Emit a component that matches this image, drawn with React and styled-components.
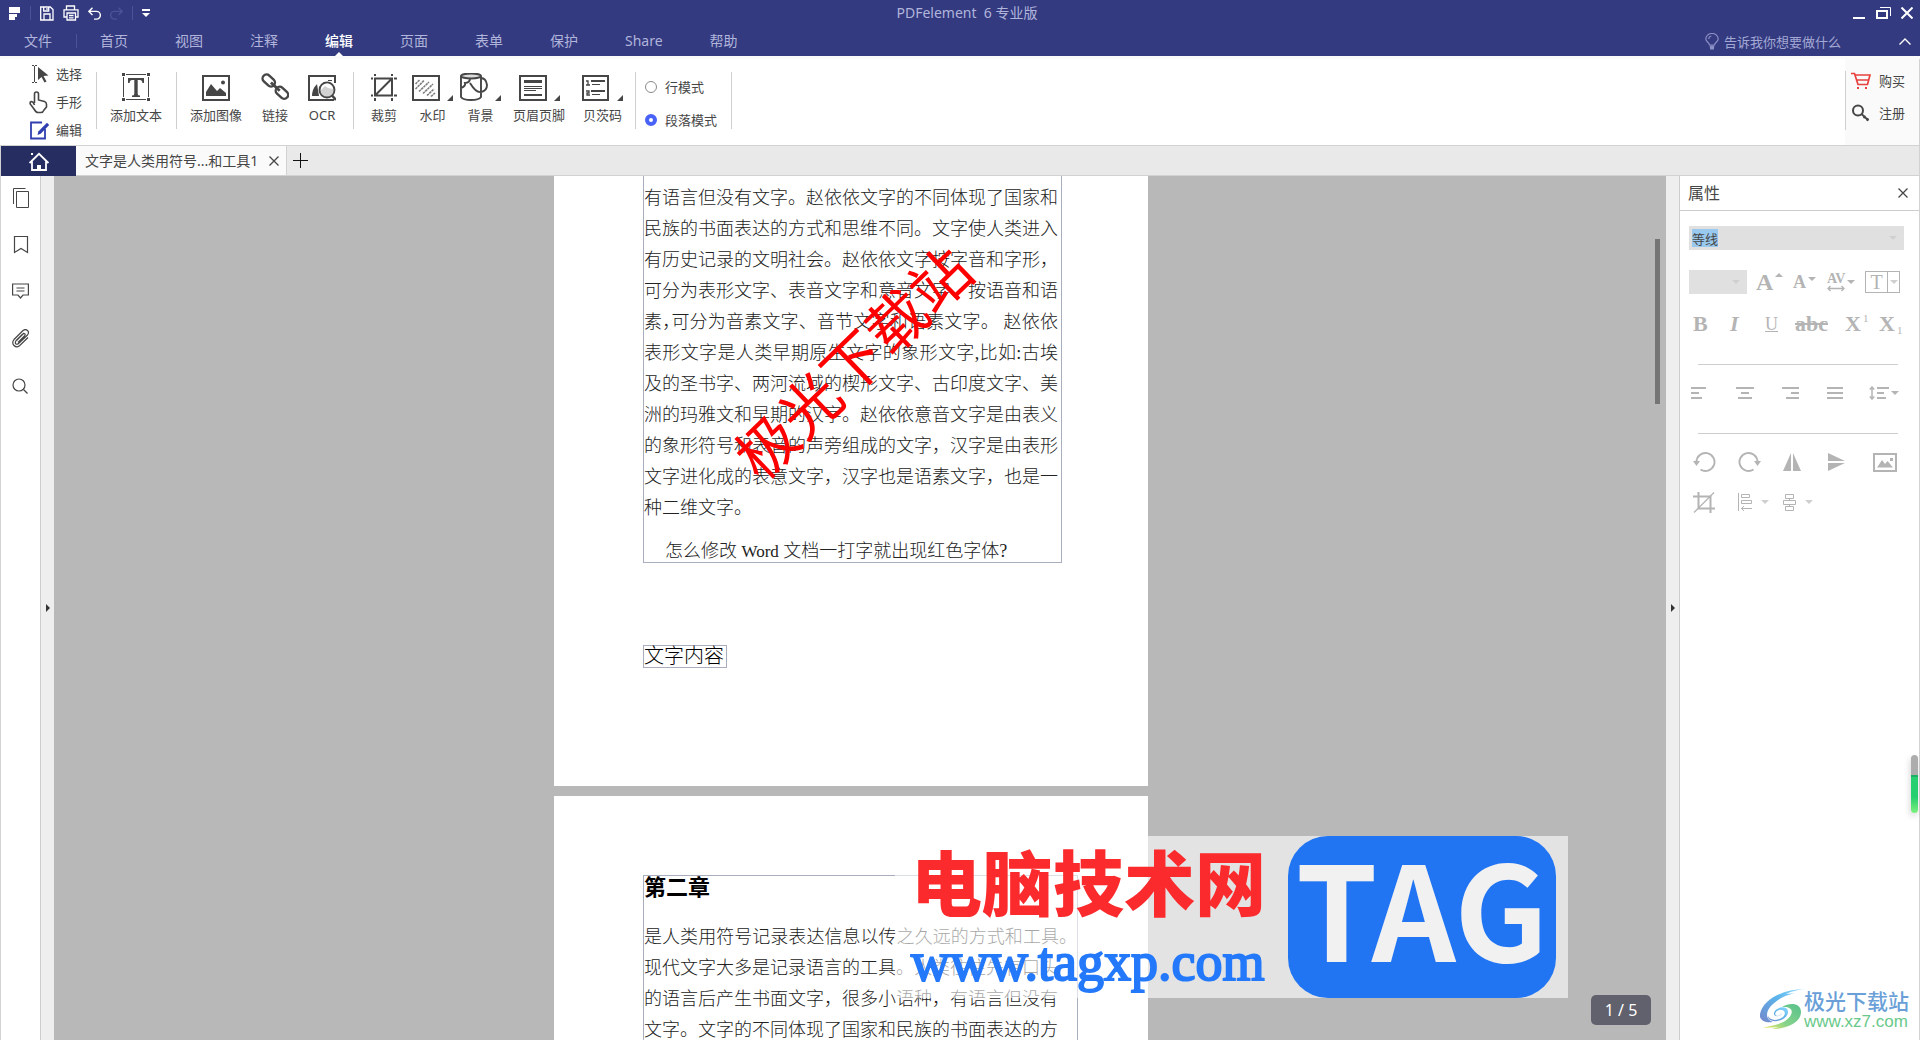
import React from "react";
import styled, { createGlobalStyle, css } from "styled-components";

const uiFont = '"Noto Sans", "Noto Sans CJK SC", sans-serif';
const pageFont = '"Liberation Serif", "Noto Sans CJK SC", serif';

const GlobalStyle = createGlobalStyle`
  *, *::before, *::after { box-sizing: border-box; }
  body { margin: 0; background: #fff; font-family: ${uiFont}; font-size: 13px; color: #464646; }
  button, input, select { font: inherit; color: inherit; margin: 0; padding: 0; border: 0; background: none; border-radius: 0; }
  h1, h2, p { margin: 0; font-size: inherit; font-weight: inherit; }
  svg { display: block; flex: none; }
  a { color: inherit; text-decoration: none; }
`;

/* ---------- frame ---------- */
const Window = styled.div`
  height: 100vh;
  display: flex;
  flex-direction: column;
  overflow: hidden;
`;
const Header = styled.header`
  background: #333a80;
  color: #b1b5db;
  flex: none;
`;
const TitleBar = styled.div`
  display: grid;
  grid-template-columns: 1fr auto 1fr;
  align-items: center;
  height: 26px;
`;
const QuickTools = styled.div`
  display: flex;
  align-items: center;
  gap: 9px;
  padding-left: 9px;
`;
const PlainButton = styled.button`
  display: flex;
  align-items: center;
  justify-content: center;
  flex: none;
`;
const TitleRule = styled.span`
  width: 1px;
  height: 14px;
  background: #4b5295;
`;
const AppTitle = styled.h1`
  padding-left: 14px;
  font-size: 14px;
  line-height: 20px;
  white-space: pre;
`;
const WindowButtons = styled.div`
  display: flex;
  justify-content: flex-end;
  align-items: center;
  gap: 10px;
  padding-right: 7px;
`;
const MenuBar = styled.nav`
  display: flex;
  align-items: center;
  height: 30px;
  padding: 0 9px 0 24px;
`;
const MenuItem = styled.a`
  position: relative;
  font-size: 14px;
  line-height: 30px;
  margin-right: 47px;
  ${(p) => p.$active && css`
    color: #fff;
    font-weight: 500;
    &::after {
      content: "";
      position: absolute;
      left: 50%;
      bottom: 0;
      margin-left: -4px;
      border: 4px solid transparent;
      border-top: 0;
      border-bottom-color: #fff;
    }
  `}
`;
const MenuRule = styled(TitleRule)`
  margin: 0 23px 0 -23px;
`;
const AskBox = styled.label`
  display: flex;
  align-items: center;
  gap: 5px;
  margin-left: auto;
  margin-right: 39px;
  padding-top: 2px;
  input { width: 136px; outline: 0; }
  input::placeholder { color: #a3a8d4; opacity: 1; }
`;

/* ---------- ribbon ---------- */
const Ribbon = styled.section`
  display: flex;
  height: 90px;
  flex: none;
  border-top: 3px solid #fafafa;
  border-bottom: 1px solid #d2d2d2;
  background: #fff;
`;
const ModeList = styled.div`
  display: flex;
  flex-direction: column;
  padding: 1px 14px 0 29px;
`;
const ModeButton = styled.button`
  display: grid;
  grid-template-columns: 21px auto;
  align-items: center;
  gap: 6px;
  height: 28px;
  line-height: 20px;
`;
const ToolGroup = styled.div`
  position: relative;
  display: flex;
  align-items: flex-start;
  padding: 14px ${(p) => p.$end || 14}px 0 ${(p) => p.$start || 14}px;
  &::before {
    content: "";
    position: absolute;
    left: 0;
    top: 13px;
    height: 57px;
    border-left: 1px solid #cfcfcf;
  }
`;
const Tool = styled.button`
  display: flex;
  flex-direction: column;
  align-items: center;
  gap: 4px;
  line-height: 20px;
  margin-left: ${(p) => p.$gap || 0}px;
  white-space: nowrap;
`;
const ToolFace = styled.span`
  display: flex;
  align-items: flex-end;
  gap: 7px;
  height: 28px;
`;
const Corner = styled.span`
  border: 3px solid transparent;
  border-right-color: #464646;
  border-bottom-color: #464646;
`;
const RadioGroup = styled.fieldset`
  position: relative;
  display: flex;
  flex-direction: column;
  gap: 13px;
  border: 0;
  margin: 0;
  padding: 18px 15px 0 10px;
  &::before, &::after {
    content: "";
    position: absolute;
    top: 13px;
    height: 57px;
    border-left: 1px solid #cfcfcf;
  }
  &::before { left: 0; }
  &::after { right: 0; }
`;
const RadioLabel = styled.label`
  display: flex;
  align-items: center;
  gap: 8px;
  line-height: 20px;
`;
const Radio = styled.input`
  appearance: none;
  width: 12px;
  height: 12px;
  border: 1px solid #8a8a8a;
  border-radius: 50%;
  &:checked { border: 4px solid #4861f7; }
`;
const Account = styled.div`
  position: relative;
  margin-left: auto;
  width: 75px;
  background: #fafafa;
  border-right: 1px solid #d2d2d2;
  padding: 12px 0 0 6px;
  display: flex;
  flex-direction: column;
  gap: 12px;
  &::before {
    content: "";
    position: absolute;
    left: 0;
    top: 12px;
    height: 59px;
    border-left: 1px solid #cfcfcf;
  }
`;
const AccountLink = styled.a`
  display: flex;
  align-items: center;
  gap: 8px;
  line-height: 20px;
`;

/* ---------- document tabs ---------- */
const TabBar = styled.div`
  display: flex;
  height: 30px;
  flex: none;
  background: #e9e9e9;
  border: solid #d2d2d2;
  border-width: 0 1px 1px;
`;
const HomeTab = styled(PlainButton)`
  width: 75px;
  height: 30px;
  background: #262d61;
`;
const DocTab = styled.div`
  display: flex;
  align-items: center;
  gap: 11px;
  padding: 0 7px 0 9px;
  background: #fafafa;
  border-right: 1px solid #d2d2d2;
  font-size: 14px;
  line-height: 28px;
`;
const AddTab = styled(PlainButton)`
  margin-left: 6px;
`;

/* ---------- body ---------- */
const Body = styled.div`
  flex: 1;
  min-height: 0;
  display: flex;
  border: solid #d2d2d2;
  border-width: 0 1px;
`;
const SideBar = styled.nav`
  width: 40px;
  flex: none;
  display: flex;
  flex-direction: column;
  align-items: center;
  gap: 27px;
  padding-top: 12px;
  border-right: 1px solid #cdcdcd;
`;
const Splitter = styled.button`
  width: 13px;
  flex: none;
  background: #eee;
  display: flex;
  align-items: center;
  justify-content: center;
  &::before {
    content: "";
    border: 4px solid transparent;
    border-right: 0;
    border-left-color: #333;
  }
`;
const Workspace = styled.main`
  position: relative;
  flex: 1;
  min-width: 0;
  overflow: hidden;
  background: #b8b8b8;
  padding-right: 18px;
  display: flex;
  flex-direction: column;
  align-items: center;
  gap: 10px;
`;
const ScrollThumb = styled.span`
  position: absolute;
  right: 6px;
  top: 63px;
  width: 5px;
  height: 165px;
  background: #757575;
`;
const Page = styled.article`
  position: relative;
  flex: none;
  width: 594px;
  background: #fff;
  padding: ${(p) => p.$top || 0}px 70px 118px 89px;
  color: #222;
  font-family: ${pageFont};
  font-size: 18px;
  font-weight: 300;
  line-height: 31px;
`;
const TextBlock = styled.section`
  width: ${(p) => (p.$wide ? 435 : 419)}px;
  border: 1px solid #a9aebf;
  ${(p) => !p.$wide && css`border-top: 0; padding-top: 7px; padding-right: 3px;`}
`;
const Line = styled.span`
  display: block;
  height: 31px;
  width: ${(p) => (p.$full ? "auto" : "414px")};
  text-align: justify;
  text-align-last: ${(p) => (p.$last ? "left" : "justify")};
`;
const NarrowMark = styled.span`
  font-feature-settings: "halt";
`;
const Question = styled.p`
  padding: 17px 0 0 21px;
  line-height: 20px;
`;
const Latin = styled.span`
  font-size: 17px;
`;
const SmallBlock = styled.p`
  width: fit-content;
  margin-top: 82px;
  padding: 0 2px 0 0;
  border: 1px solid #a9aebf;
  color: #000;
  font-size: 20px;
  line-height: 21px;
`;
const Chapter = styled.h2`
  color: #000;
  font-size: 22px;
  font-weight: 700;
  line-height: 24px;
  margin-bottom: 22px;
`;
const Diagonal = styled.span`
  position: absolute;
  left: 146px;
  top: 154px;
  width: 310px;
  height: 70px;
  transform: rotate(-44deg);
  text-align: center;
  font-size: 60px;
  line-height: 70px;
  font-weight: 400;
  color: #f00;
  white-space: nowrap;
`;
const SiteBanner = styled.aside`
  position: absolute;
  right: 98px;
  bottom: 42px;
  display: flex;
  height: 162px;
  padding: 0 12px 0 16px;
  gap: 20px;
  background: rgba(255, 255, 255, 0.6);
`;
const SiteWords = styled.div`
  display: flex;
  flex-direction: column;
  width: 357px;
`;
const SiteName = styled.strong`
  font-family: "Noto Sans CJK SC", sans-serif;
  font-size: 71px;
  font-weight: 900;
  line-height: 86px;
  color: #fb2a2c;
  white-space: nowrap;
`;
const SiteUrl = styled.a`
  font-family: "Liberation Serif", serif;
  font-size: 54px;
  line-height: 80px;
  color: #2479fb;
  -webkit-text-stroke: 2px #2479fb;
`;
const TagLogo = styled.div`
  width: 268px;
  height: 162px;
  border-radius: 40px;
  background: #2175f3;
  color: #f1f1f1;
  font-family: "Noto Sans CJK SC", sans-serif;
  font-size: 131px;
  font-weight: 700;
  line-height: 138px;
  text-align: center;
`;
const PageBadge = styled.output`
  position: absolute;
  right: 15px;
  bottom: 15px;
  width: 60px;
  height: 30px;
  border-radius: 5px;
  background: #60616d;
  color: #fff;
  font-size: 16px;
  line-height: 30px;
  text-align: center;
`;

/* ---------- properties panel ---------- */
const Panel = styled.aside`
  position: relative;
  width: 240px;
  flex: none;
  border-left: 1px solid #cdcdcd;
`;
const PanelHeader = styled.div`
  display: flex;
  align-items: center;
  justify-content: space-between;
  height: 35px;
  padding: 0 11px 0 8px;
  border-bottom: 1px solid #cdcdcd;
  font-size: 16px;
  line-height: 34px;
`;
const PanelBody = styled.div`
  padding: 15px 15px 0 9px;
  color: #b4b4b4;
`;
const FontBox = styled.div`
  display: flex;
  align-items: center;
  justify-content: space-between;
  height: 24px;
  padding: 0 7px 0 3px;
  background: #e0e0e0;
  input {
    width: 26px;
    height: 18px;
    background: #99c9ef;
    color: #464646;
    outline: 0;
  }
`;
const Caret = styled.span`
  display: inline-block;
  flex: none;
  margin-top: ${(p) => p.$drop || 0}px;
  border: 4px solid transparent;
  border-${(p) => (p.$up ? "top" : "bottom")}: 0;
  border-${(p) => (p.$up ? "bottom" : "top")}-color: ${(p) => (p.$pale ? "#cfcfcf" : "#b4b4b4")};
`;
const Row = styled.div`
  display: grid;
  grid-template-columns: ${(p) => p.$cols};
  align-items: center;
  justify-items: start;
  height: 24px;
  margin-top: ${(p) => p.$top}px;
  padding-left: ${(p) => p.$inset || 0}px;
`;
const SizeBox = styled.span`
  position: relative;
  width: 58px;
  height: 24px;
  background: #e0e0e0;
  select { appearance: none; width: 100%; height: 100%; }
  ${Caret} { position: absolute; right: 7px; top: 10px; pointer-events: none; }
`;
const Glyph = styled.button`
  display: flex;
  align-items: ${(p) => p.$align || "center"};
  gap: 2px;
  font-family: "Liberation Serif", serif;
  font-size: ${(p) => p.$size || 22}px;
  line-height: 24px;
  font-weight: ${(p) => (p.$plain ? 400 : 700)};
  font-style: ${(p) => (p.$italic ? "italic" : "normal")};
  text-decoration: ${(p) => p.$line || "none"};
  small { font-size: 11px; line-height: 12px; font-weight: 400; }
`;
const Spacing = styled.span`
  display: flex;
  flex-direction: column;
  align-items: center;
  font-size: 14px;
  line-height: 13px;
`;
const ColorBox = styled.button`
  display: grid;
  grid-template-columns: 22px 12px;
  align-items: center;
  justify-items: center;
  width: 35px;
  height: 22px;
  border: 1px solid #b4b4b4;
  font-family: "Liberation Serif", serif;
  font-size: 20px;
  line-height: 20px;
  span:first-child { border-right: 1px solid #b4b4b4; width: 22px; }
`;
const Rule = styled.hr`
  margin: 28px 6px 0 9px;
  border: 0;
  border-top: 1px solid #cdcdcd;
`;
const IconGrid = styled.div`
  display: grid;
  grid-template-columns: repeat(4, 45px) 1fr;
  align-items: center;
  height: 24px;
  margin-top: 16px;
  padding-left: ${(p) => p.$inset || 0}px;
`;
const IconButton = styled.button`
  display: flex;
  align-items: center;
  gap: ${(p) => p.$gap || 8}px;
`;
const Meter = styled.span`
  position: absolute;
  right: 1px;
  top: 579px;
  width: 7px;
  height: 58px;
  border-radius: 4px;
  background: linear-gradient(#adadad 0 20px, #1fae63 20px 22px, #26cf6f 22px 42px, #7df07f);
  box-shadow: -1px 3px 6px rgba(0, 0, 0, 0.16);
`;
const DownloadSite = styled.div`
  position: absolute;
  right: 10px;
  bottom: 8px;
  display: flex;
  align-items: center;
`;
const DownloadText = styled.div`
  display: flex;
  flex-direction: column;
  strong {
    font-size: 21px;
    line-height: 24px;
    font-weight: 500;
    font-family: "Noto Sans CJK SC", sans-serif;
    color: #6a9fd8;
  }
  a {
    font-family: "Liberation Sans", sans-serif;
    font-size: 17px;
    line-height: 20px;
    color: #69c98b;
  }
`;

/* ---------- drawings ---------- */
const Svg = ({ w, h, children, sw = 2, color = "currentColor" }) => (
  <svg width={w} height={h} viewBox={`0 0 ${w} ${h}`} fill="none" stroke={color} strokeWidth={sw} aria-hidden="true">
    {children}
  </svg>
);
const solid = { fill: "currentColor", stroke: "none" };
const dark = "#464646";

const Cross = ({ s = 10, sw = 1.3, color = dark }) => (
  <Svg w={s} h={s} sw={sw} color={color}><path d={`M.5.5l${s - 1} ${s - 1}M${s - 0.5}.5L.5 ${s - 0.5}`} /></Svg>
);
const AppMark = () => <Svg w={12} h={13}><path {...solid} fill="#fff" d="M0 0h11v6H0zM0 7h8v3H6v3H0z" /></Svg>;
const Save = () => (
  <Svg w={14} h={15} sw={1.3} color="#fff"><path d="M.7 1h9.600l2.700 2.600V14H.7zM4 14V8h6v6M3.700 1v4h5V1" /><path d="M7 2v2" /></Svg>
);
const Print = () => (
  <Svg w={16} h={16} sw={1.3} color="#fff"><path d="M3.500 4.500V1h8v3.500M3.500 12H1V4.800h14V12h-2.500M4 8h8.500v7H4zM6 10.500h4.500M6 12.800h4.500" /></Svg>
);
const Undo = ({ flip, color = "#fff" }) => (
  <Svg w={13} h={13} sw={1.4} color={color}>
    <g transform={flip ? "translate(13 0) scale(-1 1)" : undefined}><path d="M4.500.8L.9 4.400l3.600 3.600M1 4.400h7.500a3.800 3.800 0 0 1 0 7.700H6" /></g>
  </Svg>
);
const More = () => <Svg w={8} h={8}><path {...solid} fill="#fff" d="M0 0h8v2H0zM0 4h8L4 8z" /></Svg>;
const Minimize = () => <Svg w={14} h={12} color="#fff"><path d="M1 11h12" /></Svg>;
const Restore = () => <Svg w={15} h={12} color="#fff"><path d="M1 4h10v7H1z" /><path strokeWidth="1" d="M4 .5h10.500V9" /></Svg>;
const Bulb = () => (
  <Svg w={14} h={18} sw={1.2} color="#8b90c6"><path d="M4.500 12C4.500 9.500.8 9 .8 6a6.200 5.500 0 0 1 12.400 0c0 3-3.700 3.500-3.700 6zM3.800 6a3 3 0 0 1 2.500-3" /><path d="M4.800 13.500h4.400M5 15.500h4" strokeWidth="2" /></Svg>
);
const SelectIcon = () => (
  <Svg w={21} h={20} sw={1}><path d="M5.500 2v16M3 1.500h2M6 1.500h2M3 18.500h2M6 18.500h2" /><path {...solid} d="M9 3l10.500 8.500-5 .5 3 5.500-2 1-3-5.500L9 16z" /></Svg>
);
const Hand = () => (
  <Svg w={20} h={23} sw={1.6}><path d="M5.500 12V3a2 2 0 0 1 4 0v6l6 1.500q2 .8 2 3v2.500L15 19q-1 2.500-3 2.500H9Q7 21.500 5 18L1.200 13q-.5-2 1-2.500 2 0 3.300 3.500" /></Svg>
);
const EditIcon = () => (
  <Svg w={21} h={20} color="#303fb0"><path d="M16 9v9.500H2V2.500h11" strokeWidth="1.800" /><path d="M8.500 15l.8-3.500L18 2.800l2.200 2.200-8.500 8.700z" {...solid} fill="#303fb0" /></Svg>
);
const AddTextIcon = () => (
  <Svg w={28} h={28} sw={1}>
    <path d="M4 1.500h20M4 26.500h20M1.500 4v20M26.500 4v20" />
    <path {...solid} d="M0 0h3v3H0zM25 0h3v3h-3zM0 25h3v3H0zM25 25h3v3h-3zM6 5h16v5h-1.500q-.5-3-2.500-3h-2.300v14q0 1.500 2.300 1.500V24h-8v-1.500q2.300 0 2.300-1.500V7H10Q8 7 7.500 10H6z" />
  </Svg>
);
const ImageIcon = () => (
  <Svg w={28} h={26}><path d="M1 1h26v24H1z" /><path {...solid} d="M4 21v-4l5-8 6 7 3-3 6 5v3zM19 7.500a2 2 0 1 0 4 0 2 2 0 1 0-4 0" /></Svg>
);
const LinkIcon = () => (
  <Svg w={28} h={28} sw={2.4}>
    <g transform="rotate(43 14 14)"><rect x="-2" y="9.500" width="14" height="8" rx="4" /><rect x="16" y="9.500" width="14" height="8" rx="4" /><path d="M8 13.500h12" strokeWidth="2.800" /></g>
  </Svg>
);
const OcrIcon = () => (
  <Svg w={28} h={26}><path d="M27 8V1H1v24h25" /><path {...solid} d="M4 21q0-7 5-12l2 12zM20 5h4v1h-4z" /><circle cx="19" cy="15" r="7.500" fill="#d2d2d2" strokeWidth="1.800" /><path fill="#fff" stroke="none" d="M13 15a6 6 0 0 1 12-1l-5-1-3-2z" /><path d="M24 20.500l4 4.500" strokeWidth="2.500" /></Svg>
);
const CropIcon = () => (
  <Svg w={28} h={27}><path d="M5 4.500h17v17H5zM5 21.500L22 4.500M5 0v2M22 0v2M5 24v3M22 24v3M1 4.500h2M1 21.500h2M24 4.500h3M24 21.500h3" /></Svg>
);
const WatermarkIcon = () => (
  <Svg w={28} h={26}><path d="M1 1h26v24H1z" /><path stroke="#7c7c7c" strokeWidth="1.600" d="M3.500 9l4-4M3.500 14L12 5.500M7 16.500L17 7M11 18.500l10-9.500M15 20.500l7-6.500M19 21.500l4-3.500" strokeDasharray="2.500 .6" /></Svg>
);
const BackgroundIcon = () => (
  <Svg w={28} h={28} sw={1.9}><ellipse cx="11" cy="3" rx="10" ry="2.500" fill="#ddd" /><path d="M1 3v21q2 3 10 3t10-3V3M1 15q5-2 4-5 5 0 5-5M10 10q6 10 11 9 6-1 6-7-1-7-6-7" /></Svg>
);
const HeaderIcon = () => (
  <Svg w={28} h={26}><path d="M1 1h26v24H1z" /><path strokeWidth="3" d="M5 6.500h18" /><path strokeWidth="1" d="M5 11.500h18M5 13.500h18M5 15.500h12" /><path d="M5 20h18" /></Svg>
);
const BatesIcon = () => (
  <Svg w={28} h={26}><path d="M1 1h25v24H1z" /><path strokeWidth="1.300" d="M4 6h2v4M4 10h4M4 16h3v2H5v2h3" /><path d="M9 6h14M9 16h14" /><path strokeWidth="1" d="M10 9.500h8M10 19.500h8" /></Svg>
);
const CartIcon = () => (
  <Svg w={20} h={18} color="#e8403c"><path d="M0 1.500h3.500L7 12.500h9.500L19 3H4M5.500 8h12" strokeWidth="1.700" /><path d="M6 16h2M14 16h2" /></Svg>
);
const KeyIcon = () => (
  <Svg w={20} h={18}><circle cx="7" cy="6.500" r="5" /><path d="M10.500 10l7 6.500M12.500 14l2-2M15.500 16.500l2-2" strokeWidth="1.800" /></Svg>
);
const HomeIcon = () => (
  <Svg w={20} h={19} sw={1.8} color="#fff"><path d="M.6 11L10 1.800l9.400 9.200M3 9.500V18h14V9.500" /><path stroke="none" fill="#fff" d="M2 1h2v2H2zM8 13h4v5H8z" /></Svg>
);
const PlusIcon = () => <Svg w={15} h={15} sw={1} color="#111"><path d="M7.500 0v15M0 7.500h15" /></Svg>;
const PagesIcon = () => <Svg w={17} h={20} sw={1}><path d="M4.500 3.500h12v16h-12zM1.500 16V.5h12" /></Svg>;
const BookmarkIcon = () => <Svg w={17} h={20} sw={1.2}><path d="M2.500 1.500h13v16l-6.500-4-6.500 4z" /></Svg>;
const CommentIcon = () => <Svg w={17} h={20} sw={1.2}><path d="M.6 2h15.800v11H11l-2.500 3L6 13H.6zM4.500 6h8M4.500 9h8" /></Svg>;
const ClipIcon = () => (
  <Svg w={18} h={20} sw={1.2}><path d="M4.500 11.500l7.500-7.500M6 13.500l6.500-6.500q1.500-2-.3-2.500-1 0-2 1L4 11.700q-1.500 2.500.3 3.500 1.200.2 2.500-1L15.500 6q2-2.500 0-4.500t-4.500 0L2 10.500q-2.500 3.500 0 6t5.500.3L16 8.500" /></Svg>
);
const SearchIcon = () => <Svg w={17} h={20} sw={1.2}><circle cx="7" cy="9" r="6" /><path d="M11.500 13.500l4 4" /></Svg>;

const Lines = ({ rows, w = 18 }) => (
  <Svg w={w} h={12}>{rows.map(([a, b], i) => <path key={i} d={`M${a} ${1 + i * 5}h${b - a}`} />)}</Svg>
);
const LineGap = () => <Svg w={21} h={14} sw={1.5}><path d="M3 1v12M.8 3.500L3 1l2.200 2.500M.8 10.500L3 13l2.200-2.500" /><path strokeWidth="2" d="M8 2h12M8 7h7M8 12h9" /></Svg>;
const Rotate = ({ right }) => (
  <Svg w={23} h={22} sw={1.9}><g transform={right ? "translate(23 0) scale(-1 1)" : undefined}><path d="M3.500 11a9 9 0 1 1 4 7.500" /><path {...solid} d="M0 10h7l-3.500 5z" /></g></Svg>
);
const FlipH = () => <Svg w={18} h={19}><path {...solid} d="M8 0v18H0zM10 0v18h8z" /></Svg>;
const FlipV = () => <Svg w={17} h={18}><path {...solid} d="M0 8V0l17 8zM0 10v8l17-8z" /></Svg>;
const Picture = () => <Svg w={24} h={19}><path d="M1 1h22v17H1z" /><path {...solid} d="M4 14.500L9 7l3 4 2.500-3 5.500 6.500zM17 5h3v3h-3z" /></Svg>;
const CropSmall = () => <Svg w={22} h={21}><path d="M0 4.500h17.500V21M5.500 0v16.500H22" /><path strokeWidth="1.300" d="M1 20.500L21 .5" /></Svg>;
const AlignObj = () => <Svg w={15} h={18} sw={1}><path d="M.5 0v18M3.500 1.500h8v3h-8zM3.500 7.500h10v3h-10zM3 15.500h11M6 13l-2.500 2.500L6 18" /></Svg>;
const SpreadObj = () => <Svg w={14} h={17} sw={1}><path d="M2.500.5h8v4h-8zM.5 6.500h12v4H.5zM2.500 12.500h8v4h-8zM6.500 4.500v2M6.500 10.500v2" /></Svg>;
const SpacingArrow = () => <Svg w={18} h={7} sw={1.3}><path d="M1 3.500h16M3.500 1L1 3.500 3.500 6M14.500 1L17 3.500 14.500 6" /></Svg>;

const Swirl = () => (
  <svg width="44" height="42" viewBox="0 0 44 42" aria-hidden="true">
    <defs>
      <linearGradient id="sky" x1="1" y1="0" x2="0" y2="1"><stop offset="0" stopColor="#8fdcff" /><stop offset=".45" stopColor="#5cb3ea" /><stop offset="1" stopColor="#7488cc" /></linearGradient>
      <linearGradient id="leaf" x1="1" y1="0" x2="0" y2="1"><stop offset="0" stopColor="#57c08c" /><stop offset=".6" stopColor="#86d38b" /><stop offset="1" stopColor="#f6ea62" /></linearGradient>
    </defs>
    <path fill="url(#sky)" d="M44 0C24 0 3 10 0 25c-1 7 6 9 13 8-9-3-7-12 0-18C20 8 30 5 36 4L26 5C32 2 38 1 44 0z" />
    <path fill="url(#sky)" d="M8 26c0 5 9 7 15 2 4-4 1-8-4-7-4 1-5 5-2 6 3 0 4-2 5-3-1 4-8 4-8 1 0-5 7-8 12-6 4 3 2 9-5 12-8 3-14 0-13-5z" />
    <path fill="url(#leaf)" d="M22 18c8-5 19-4 19 5 0 10-13 17-29 17l7-2-16 1c4-2 11-2 18-5 11-4 17-17 1-16z" />
  </svg>
);

/* ---------- content ---------- */
const menus = ["首页", "视图", "注释", "编辑", "页面", "表单", "保护", "Share", "帮助"];
const firstText = [
  "有语言但没有文字。赵依依文字的不同体现了国家和",
  "民族的书面表达的方式和思维不同。文字使人类进入",
  "有历史记录的文明社会。赵依依文字按字音和字形，",
  "可分为表形文字、表音文字和意音文字、按语音和语",
  <>素<NarrowMark>，</NarrowMark>可分为音素文字、音节文字和语素文字。 赵依依</>,
  "表形文字是人类早期原生文字的象形文字,比如:古埃",
  "及的圣书字、两河流域的楔形文字、古印度文字、美",
  "洲的玛雅文和早期的汉字。赵依依意音文字是由表义",
  "的象形符号和表音的声旁组成的文字，汉字是由表形",
  "文字进化成的表意文字，汉字也是语素文字，也是一",
];
const secondText = [
  "现代文字大多是记录语言的工具。人类往往先有口头",
  "的语言后产生书面文字，很多小语种，有语言但没有",
  "文字。文字的不同体现了国家和民族的书面表达的方",
];
const sideItems = [
  ["缩略图", PagesIcon], ["书签", BookmarkIcon], ["注释", CommentIcon], ["附件", ClipIcon], ["搜索", SearchIcon],
];

function RibbonTool({ icon: Icon, label, drop, gap }) {
  return (
    <Tool type="button" $gap={gap}>
      <ToolFace><Icon />{drop && <Corner />}</ToolFace>
      {label}
    </Tool>
  );
}

export default function App() {
  return (
    <Window lang="zh-CN">
      <GlobalStyle />
      <Header>
        <TitleBar>
          <QuickTools>
            <AppMark />
            <TitleRule />
            <PlainButton aria-label="保存"><Save /></PlainButton>
            <PlainButton aria-label="打印"><Print /></PlainButton>
            <PlainButton aria-label="撤销"><Undo /></PlainButton>
            <PlainButton aria-label="重做"><Undo flip color="#4b5295" /></PlainButton>
            <TitleRule />
            <PlainButton aria-label="更多"><More /></PlainButton>
          </QuickTools>
          <AppTitle>PDFelement  6 专业版</AppTitle>
          <WindowButtons>
            <PlainButton aria-label="最小化"><Minimize /></PlainButton>
            <PlainButton aria-label="还原"><Restore /></PlainButton>
            <PlainButton aria-label="关闭"><Cross s={12} sw={2} color="#fff" /></PlainButton>
          </WindowButtons>
        </TitleBar>
        <MenuBar>
          <MenuItem href="#">文件</MenuItem>
          <MenuRule />
          {menus.map((m) => <MenuItem key={m} href="#" $active={m === "编辑"}>{m}</MenuItem>)}
          <AskBox><Bulb /><input aria-label="搜索功能" placeholder="告诉我你想要做什么" /></AskBox>
          <PlainButton aria-label="折叠功能区"><Svg w={12} h={7} sw={1.4} color="#fff"><path d="M.5 6.500L6 1l5.500 5.500" /></Svg></PlainButton>
        </MenuBar>
      </Header>

      <Ribbon>
        <ModeList>
          <ModeButton><SelectIcon />选择</ModeButton>
          <ModeButton><Hand />手形</ModeButton>
          <ModeButton><EditIcon />编辑</ModeButton>
        </ModeList>
        <ToolGroup><RibbonTool icon={AddTextIcon} label="添加文本" /></ToolGroup>
        <ToolGroup $end={17}>
          <RibbonTool icon={ImageIcon} label="添加图像" />
          <RibbonTool icon={LinkIcon} label="链接" gap={19} />
          <RibbonTool icon={OcrIcon} label="OCR" gap={19} />
        </ToolGroup>
        <ToolGroup $start={17} $end={12}>
          <RibbonTool icon={CropIcon} label="裁剪" />
          <RibbonTool icon={WatermarkIcon} label="水印" drop gap={14} />
          <RibbonTool icon={BackgroundIcon} label="背景" drop gap={7} />
          <RibbonTool icon={HeaderIcon} label="页眉页脚" drop gap={12} />
          <RibbonTool icon={BatesIcon} label="贝茨码" drop gap={17} />
        </ToolGroup>
        <RadioGroup>
          <RadioLabel><Radio type="radio" name="mode" />行模式</RadioLabel>
          <RadioLabel><Radio type="radio" name="mode" defaultChecked />段落模式</RadioLabel>
        </RadioGroup>
        <Account>
          <AccountLink href="#"><CartIcon />购买</AccountLink>
          <AccountLink href="#"><KeyIcon />注册</AccountLink>
        </Account>
      </Ribbon>

      <TabBar>
        <HomeTab aria-label="主页"><HomeIcon /></HomeTab>
        <DocTab>文字是人类用符号...和工具1<PlainButton aria-label="关闭标签"><Cross /></PlainButton></DocTab>
        <AddTab aria-label="新建标签"><PlusIcon /></AddTab>
      </TabBar>

      <Body>
        <SideBar>
          {sideItems.map(([name, Icon]) => <PlainButton key={name} aria-label={name}><Icon /></PlainButton>)}
        </SideBar>
        <Splitter aria-label="展开侧栏" />
        <Workspace>
          <Page>
            <TextBlock>
              <p>
                {firstText.map((t, i) => <Line key={i}>{t}</Line>)}
                <Line $last>种二维文字。</Line>
              </p>
              <Question>怎么修改 <Latin>Word</Latin> 文档一打字就出现红色字体?</Question>
            </TextBlock>
            <SmallBlock>文字内容</SmallBlock>
            <Diagonal>极光下载站</Diagonal>
          </Page>
          <Page $top={79}>
            <TextBlock $wide>
              <Chapter>第二章</Chapter>
              <p>
                <Line $full>是人类用符号记录表达信息以传之久远的方式和工具。</Line>
                {secondText.map((t) => <Line key={t}>{t}</Line>)}
              </p>
            </TextBlock>
          </Page>
          <ScrollThumb />
          <SiteBanner>
            <SiteWords>
              <SiteName>电脑技术网</SiteName>
              <SiteUrl href="#">www.tagxp.com</SiteUrl>
            </SiteWords>
            <TagLogo>TAG</TagLogo>
          </SiteBanner>
          <PageBadge>1 / 5</PageBadge>
        </Workspace>
        <Splitter aria-label="收起属性" />
        <Panel>
          <PanelHeader><h2>属性</h2><PlainButton aria-label="关闭属性"><Cross /></PlainButton></PanelHeader>
          <PanelBody>
            <FontBox><input aria-label="字体" defaultValue="等线" /><Caret $pale /></FontBox>
            <Row $top={20} $cols="67px 37px 34px 38px 1fr">
              <SizeBox><select aria-label="字号"><option> </option></select><Caret $pale /></SizeBox>
              <Glyph $size={24} $align="flex-start">A<Caret $up $drop={3} /></Glyph>
              <Glyph $size={18} $align="flex-start">A<Caret $drop={7} /></Glyph>
              <Glyph aria-label="字符间距"><Spacing>AV<SpacingArrow /></Spacing><Caret /></Glyph>
              <ColorBox aria-label="文字颜色"><span>T</span><Caret $pale /></ColorBox>
            </Row>
            <Row $top={18} $inset={4} $cols="37px 35px 30px 50px 34px 1fr">
              <Glyph>B</Glyph>
              <Glyph $italic>I</Glyph>
              <Glyph $plain $size={18} $line="underline">U</Glyph>
              <Glyph $line="line-through">abc</Glyph>
              <Glyph $align="flex-start">X<small>1</small></Glyph>
              <Glyph $align="flex-end">X<small>1</small></Glyph>
            </Row>
            <Rule />
            <IconGrid>
              <IconButton aria-label="左对齐"><Lines rows={[[2, 17], [2, 10], [2, 13]]} /></IconButton>
              <IconButton aria-label="居中"><Lines rows={[[2, 20], [7, 15], [4, 18]]} w={20} /></IconButton>
              <IconButton aria-label="右对齐"><Lines rows={[[3, 20], [12, 20], [7, 20]]} w={20} /></IconButton>
              <IconButton aria-label="两端对齐"><Lines rows={[[3, 19], [3, 19], [3, 19]]} w={20} /></IconButton>
              <IconButton aria-label="行距" $gap={1}><LineGap /><Caret /></IconButton>
            </IconGrid>
            <Rule />
            <IconGrid $inset={4}>
              <IconButton aria-label="向左旋转"><Rotate /></IconButton>
              <IconButton aria-label="向右旋转"><Rotate right /></IconButton>
              <IconButton aria-label="水平翻转"><FlipH /></IconButton>
              <IconButton aria-label="垂直翻转"><FlipV /></IconButton>
              <IconButton aria-label="替换图像"><Picture /></IconButton>
            </IconGrid>
            <IconGrid $inset={4}>
              <IconButton aria-label="裁剪"><CropSmall /></IconButton>
              <IconButton aria-label="对齐"><AlignObj /><Caret $pale /></IconButton>
              <IconButton aria-label="分布"><SpreadObj /><Caret $pale /></IconButton>
            </IconGrid>
          </PanelBody>
          <Meter />
          <DownloadSite>
            <Swirl />
            <DownloadText><strong>极光下载站</strong><a href="#">www.xz7.com</a></DownloadText>
          </DownloadSite>
        </Panel>
      </Body>
    </Window>
  );
}
